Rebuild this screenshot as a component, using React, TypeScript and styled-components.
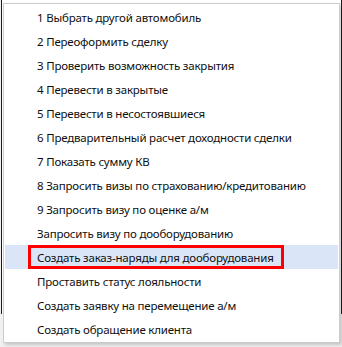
import styled, { createGlobalStyle } from "styled-components";

const GlobalStyle = createGlobalStyle`
  html, body {
    margin: 0;
    padding: 0;
    background: #f0f0f0;
  }
  body {
    font-family: "Noto Sans", "Liberation Sans", sans-serif;
  }
`;

const Screen = styled.div`
  position: relative;
  width: 342px;
  height: 347px;
  overflow: hidden;
  background: #f0f0f0;
`;

// the window behind the popup, only its left edge shows
const BackWindow = styled.div`
  width: 339px;
  height: 314px;
  margin-left: 1px;
  border-left: 1px solid #1b1b1b;
  border-right: 1px solid #1b1b1b;
  background: #ffffff;
`;

const Menu = styled.ul`
  position: absolute;
  left: 3px;
  top: 3px;
  width: 333px;
  margin: 0;
  padding: 1px;
  list-style: none;
  background: #ffffff;
  border: 1px solid #cccccc;
  box-shadow: 2px 2px 3px rgba(0, 0, 0, 0.18);
`;

const Item = styled.li<{ active?: boolean }>`
  position: relative;
  height: 24px;
  display: flex;
  align-items: center;
  padding-left: 32px;
  font-size: 11.5px;
  letter-spacing: -0.2px;
  color: #101010;
  white-space: nowrap;
  background: ${(props) => (props.active ? "#dae6f8" : "transparent")};
`;

const Marker = styled.span`
  position: absolute;
  left: 23px;
  top: 0;
  width: 250px;
  height: 18px;
  border: 3px solid #ff0000;
`;

const items = [
  "1 Выбрать другой автомобиль",
  "2 Переоформить сделку",
  "3 Проверить возможность закрытия",
  "4 Перевести в закрытые",
  "5 Перевести в несостоявшиеся",
  "6 Предварительный расчет доходности сделки",
  "7 Показать сумму КВ",
  "8 Запросить визы по страхованию/кредитованию",
  "9 Запросить визу по оценке а/м",
  "Запросить визу по дооборудованию",
  "Создать заказ-наряды для дооборудования",
  "Проставить статус лояльности",
  "Создать заявку на перемещение а/м",
  "Создать обращение клиента",
];

const App = () => {
  return (
    <Screen>
      <GlobalStyle />
      <BackWindow />
      <Menu>
        {items.map((text, index) => (
          <Item key={text} active={index === 10}>
            {index === 10 && <Marker />}
            {text}
          </Item>
        ))}
      </Menu>
    </Screen>
  );
};

export default App;
